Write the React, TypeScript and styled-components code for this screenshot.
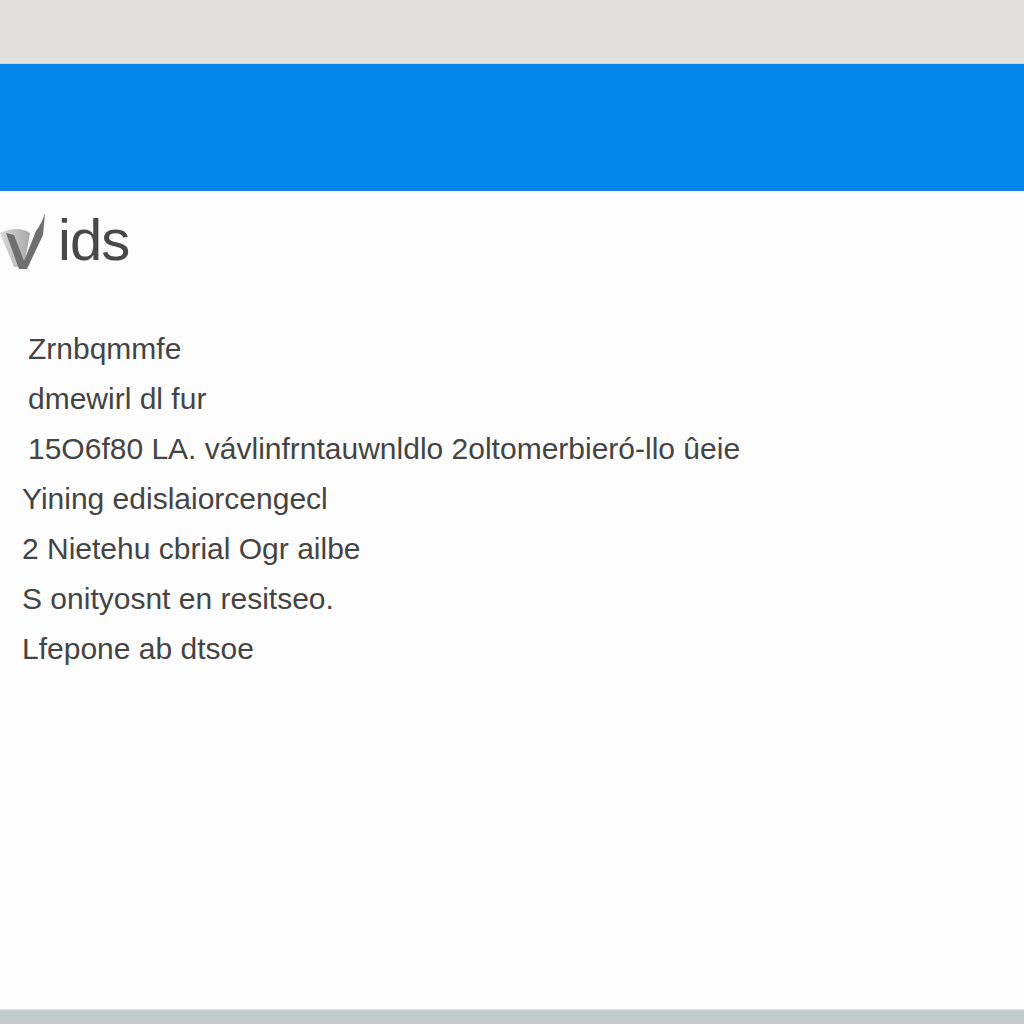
import React from 'react';
import styled, { createGlobalStyle } from 'styled-components';

const GlobalStyle = createGlobalStyle`
  html, body {
    margin: 0;
    padding: 0;
    background: #fdfdfd;
  }
  #root {
    height: 1024px;
  }
`;

const Page = styled.div`
  display: flex;
  flex-direction: column;
  width: 1024px;
  height: 1024px;
  overflow: hidden;
  font-family: 'Liberation Sans', Arial, sans-serif;
`;

const TopBand = styled.div`
  height: 63px;
  background: #e2e0dc;
  border-bottom: 1px solid #cfd6dc;
`;

const BlueBar = styled.header`
  height: 126px;
  background: #0486ea;
  border-bottom: 1px solid #1a7fd0;
`;

const Content = styled.main`
  flex: 1;
  display: flex;
  flex-direction: column;
  background: #fdfdfd;
  padding: 18px 0 0 0;
`;

const TitleRow = styled.div`
  display: flex;
  align-items: flex-end;
  height: 60px;
`;

const Logo = styled.svg`
  width: 48px;
  height: 58px;
  flex: none;
`;

const Title = styled.h1`
  margin: 0 0 0 10px;
  font-size: 58px;
  font-weight: 400;
  line-height: 58px;
  color: #484848;
  letter-spacing: -1px;
`;

const Lines = styled.div`
  display: flex;
  flex-direction: column;
  gap: 13px;
  margin-top: 61px;
`;

const Line = styled.p<{ $indent: number }>`
  margin: 0;
  padding-left: ${p => p.$indent}px;
  font-size: 30px;
  line-height: 37px;
  color: #444444;
  letter-spacing: 0;
  white-space: nowrap;
`;

const BottomStrip = styled.div`
  height: 14px;
  background: #c3cbcb;
  border-top: 1px solid #dfe4e4;
`;

const lines: [string, number][] = [
  ['Zrnbqmmfe', 28],
  ['dmewirl dl fur', 28],
  ['15O6f80 LA. vávlinfrntauwnldlo 2oltomerbieró-llo ûeie', 28],
  ['Yining edislaiorcengecl', 22],
  ['2  Nietehu cbrial Ogr ailbe', 22],
  ['S onityosnt en resitseo.', 22],
  ['Lfepone ab dtsoe', 22],
];

const App = () => (
  <>
    <GlobalStyle />
    <Page>
      <TopBand />
      <BlueBar />
      <Content>
        <TitleRow>
          <Logo viewBox="0 0 48 58">
            <defs>
              <linearGradient id="vfade" x1="0" y1="0" x2="1" y2="0">
                <stop offset="0" stopColor="#d8d8d8" />
                <stop offset="1" stopColor="#a9a9a9" />
              </linearGradient>
            </defs>
            <path d="M0 22 Q18 14 30 22 L24 56 L14 56 Z" fill="url(#vfade)" />
            <path d="M6 22 L14 24 L24 50 L36 20 Q42 12 45 2 L43 24 L27 58 L19 58 Z" fill="#6f6f6f" />
          </Logo>
          <Title>ids</Title>
        </TitleRow>
        <Lines>
          {lines.map(([text, indent], i) => (
            <Line key={i} $indent={indent}>{text}</Line>
          ))}
        </Lines>
      </Content>
      <BottomStrip />
    </Page>
  </>
);

export default App;
